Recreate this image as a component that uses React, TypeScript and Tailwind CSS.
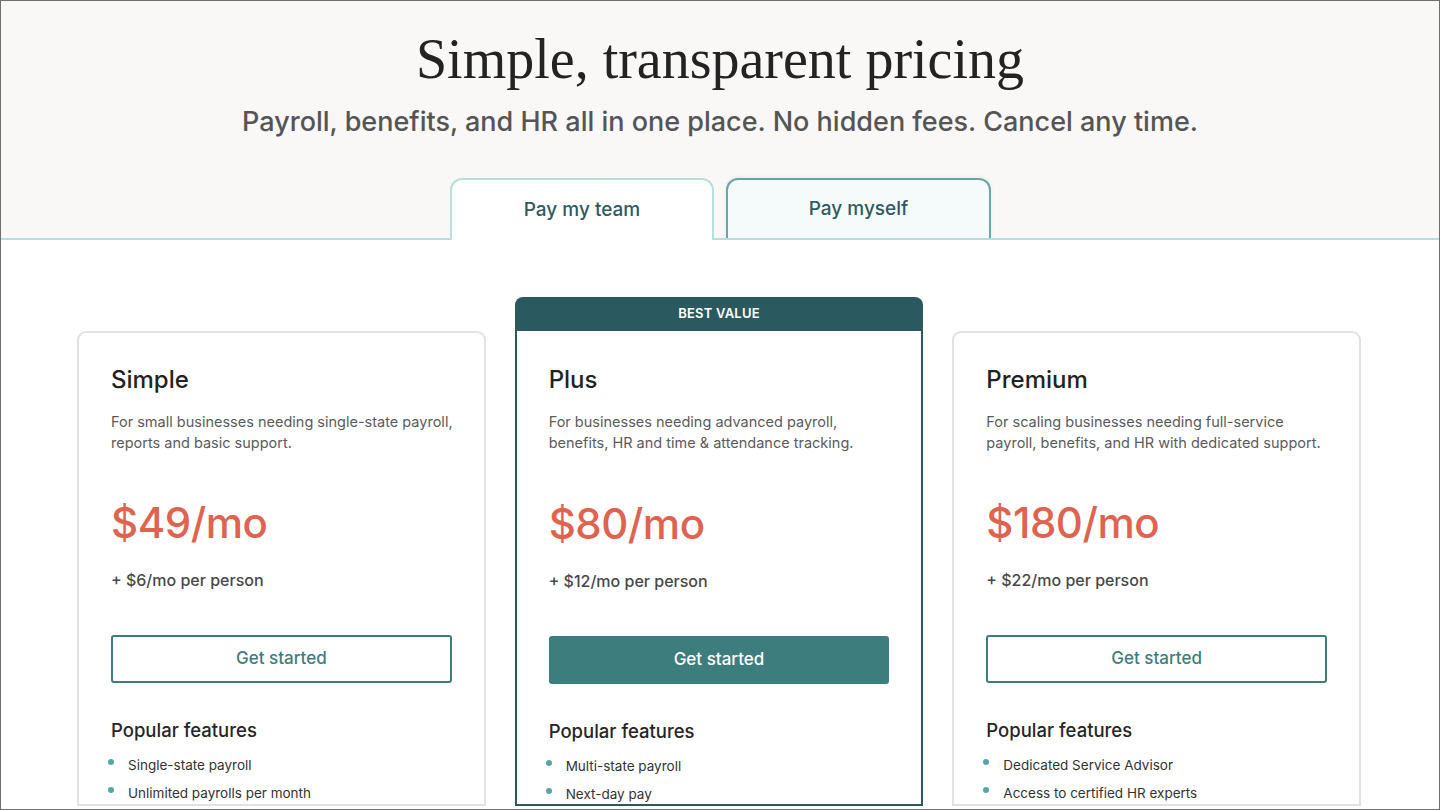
import React from 'react';

interface Plan {
  name: string;
  description: string[];
  price: string;
  perPerson: string;
  features: string[];
  featured?: boolean;
}

const plans: Plan[] = [
  {
    name: 'Simple',
    description: ['For small businesses needing single-state payroll,', 'reports and basic support.'],
    price: '$49/mo',
    perPerson: '+ $6/mo per person',
    features: ['Single-state payroll', 'Unlimited payrolls per month'],
  },
  {
    name: 'Plus',
    description: ['For businesses needing advanced payroll,', 'benefits, HR and time & attendance tracking.'],
    price: '$80/mo',
    perPerson: '+ $12/mo per person',
    features: ['Multi-state payroll', 'Next-day pay'],
    featured: true,
  },
  {
    name: 'Premium',
    description: ['For scaling businesses needing full-service', 'payroll, benefits, and HR with dedicated support.'],
    price: '$180/mo',
    perPerson: '+ $22/mo per person',
    features: ['Dedicated Service Advisor', 'Access to certified HR experts'],
  },
];

function PlanCard({ plan }: { plan: Plan }) {
  return (
    <div className="flex flex-col">
      {plan.featured ? (
        <div className="h-[34px] rounded-t-[8px] bg-[#2a5a60] flex items-center justify-center text-[13px] font-semibold tracking-[0.2px] text-white">
          BEST VALUE
        </div>
      ) : (
        <div className="h-[34px]" />
      )}
      <div
        className={`flex-1 bg-white px-[32px] ${
          plan.featured
            ? 'border-2 border-t-0 border-[#2a5a60] pt-[34px]'
            : 'border-2 border-[#e2e2e2] rounded-t-[9px] pt-[32px]'
        }`}
      >
        <h3 className="text-[24px] leading-[30px] font-medium text-[#232323]">{plan.name}</h3>
        <p className="mt-[16px] text-[14.5px] leading-[21px] text-[#5b5b5b]">
          {plan.description.map((line, i) => (
            <span key={i} className="block whitespace-nowrap">{line}</span>
          ))}
        </p>
        <div className={`${plan.featured ? 'mt-[46px]' : 'mt-[45px]'} text-[42px] leading-[50px] font-medium tracking-[-0.5px] text-[#df6450]`}>
          {plan.price}
        </div>
        <div className="mt-[21px] text-[16px] leading-[22px] font-medium text-[#484848]">{plan.perPerson}</div>
        <button
          className={`mt-[44px] w-full h-[48px] rounded-[3px] text-[17px] font-medium ${
            plan.featured
              ? 'bg-[#3e7d7d] text-white'
              : 'border-2 border-[#3e7d7d] bg-white text-[#3e7d7d]'
          }`}
        >
          Get started
        </button>
        <h4 className="mt-[34px] text-[18.5px] leading-[26px] font-medium text-[#262626]">Popular features</h4>
        <ul className="mt-[12px] flex flex-col gap-[8px]">
          {plan.features.map((f) => (
            <li key={f} className="flex items-start text-[13.5px] leading-[20px] text-[#333]">
              <span className="mt-[4px] mr-[14px] h-[6px] w-[6px] rounded-full bg-[#5aa5a5] shrink-0 -ml-[3px]" />
              <span>{f}</span>
            </li>
          ))}
        </ul>
      </div>
    </div>
  );
}

export default function App() {
  return (
    <div
      className="h-[810px] w-full overflow-hidden border border-[#6e6e6e] bg-white"
      style={{ fontFamily: 'Inter, "Open Sans", sans-serif' }}
    >
      <div className="bg-[#faf7f7] border-b-2 border-[#b9dede]">
        <h1
          className="pt-[25px] text-center text-[56px] leading-[66px] text-[#232323]"
          style={{ fontFamily: '"Liberation Serif", serif' }}
        >
          Simple, transparent pricing
        </h1>
        <p className="mt-[12px] text-center text-[27px] leading-[36px] font-medium text-[#555]">
          Payroll, benefits, and HR all in one place. No hidden fees. Cancel any time.
        </p>
        <div className="mt-[38px] flex justify-center gap-[12px] pl-[1px]">
          <button className="-mb-[2px] h-[62px] w-[264px] rounded-t-[12px] border-2 border-b-0 border-[#b9dede] bg-white text-[19px] font-medium text-[#2f5a5f]">
            Pay my team
          </button>
          <button className="h-[60px] w-[265px] rounded-t-[12px] border-2 border-b-0 border-[#6aa6a6] bg-[#f5fafa] text-[19px] font-medium text-[#2f5a5f] shadow-[0_-1px_4px_rgba(0,0,0,0.06)]">
            Pay myself
          </button>
        </div>
      </div>
      <div className="ml-[76px] mt-[57px] grid w-[1284px] grid-cols-3 gap-[29px]">
        {plans.map((p) => (
          <PlanCard key={p.name} plan={p} />
        ))}
      </div>
    </div>
  );
}
